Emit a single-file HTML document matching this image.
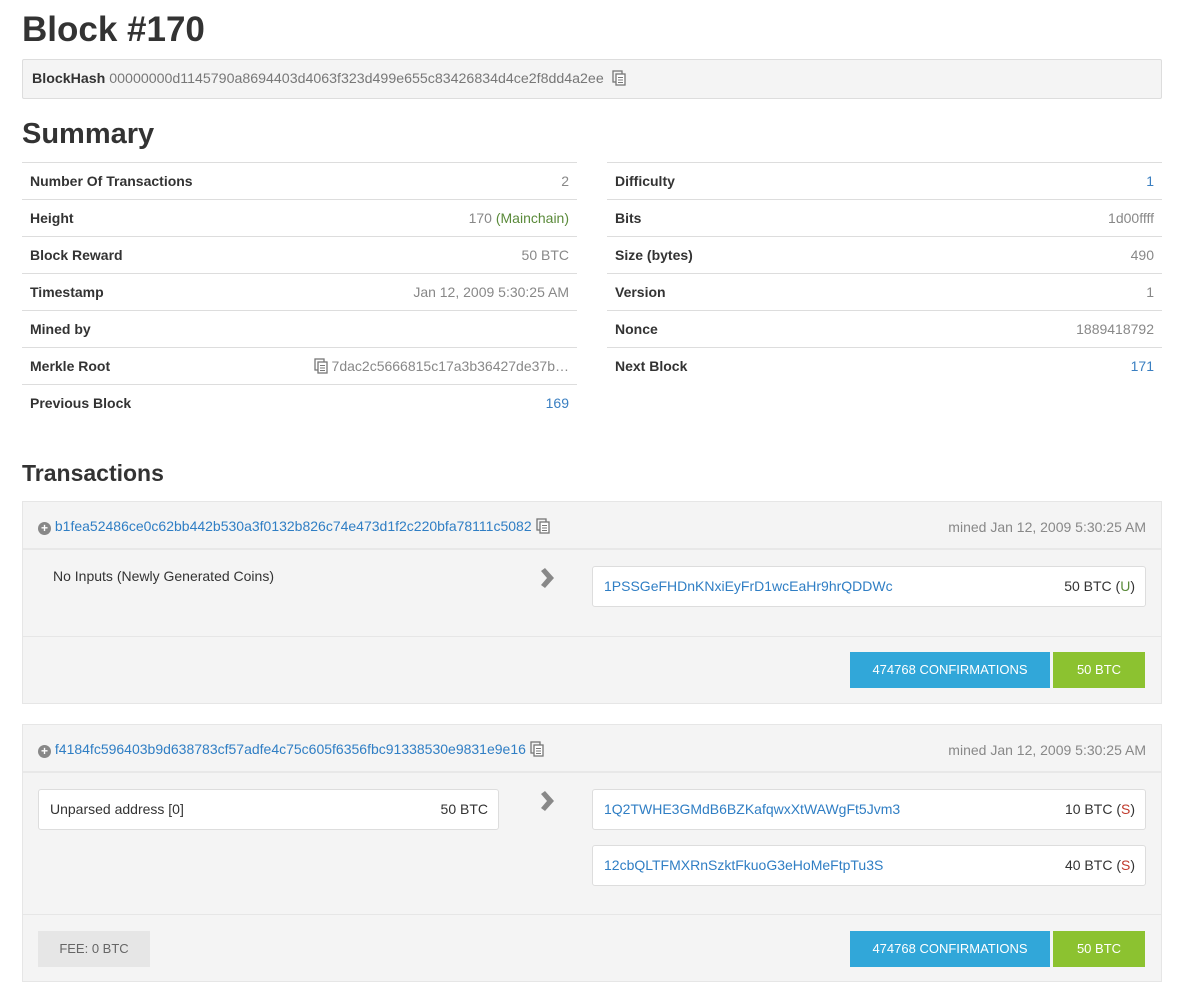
<!DOCTYPE html>
<html><head><style>
body{margin:0;background:#fff;font-family:"Liberation Sans",sans-serif;color:#333;font-size:14px}
.a{position:absolute}
h1{position:absolute;left:22px;top:10px;margin:0;font-size:35px;font-weight:bold;color:#333}
h2{position:absolute;left:22px;margin:0;font-weight:bold;color:#333}
.hash{left:22px;top:59px;width:1138px;height:38px;background:#f4f4f4;border:1px solid #ddd;border-radius:2px;line-height:38px;color:#777;font-size:14.2px}
.hash b{color:#333;margin-left:9px}
table{position:absolute;border-collapse:collapse;width:555px}
td{border-top:1px solid #ddd;height:36px;padding:0 8px;font-size:14px}
td:first-child{font-weight:bold;color:#333}
td:last-child{text-align:right;color:#888}
.l{color:#3a7fc1!important}
.tx{position:absolute;left:22px;width:1138px;background:#f4f4f4;border:1px solid #e6e6e6}
.th{height:46px;border-bottom:2px solid #e8e8e8;position:relative}
.blue{color:#2f7ec4}
.box{position:absolute;background:#fff;border:1px solid #ddd;border-radius:3px;height:39px;line-height:39px}
.btn{position:absolute;height:36px;line-height:36px;color:#fff;text-align:center;font-size:13px}
.ic{display:inline-block;vertical-align:-3px;margin-left:4px}
.plus{display:inline-block;width:13px;height:13px;border-radius:50%;background:#888;color:#fff;font-size:12px;line-height:13px;text-align:center;font-weight:bold;vertical-align:-1px}
.arr{position:absolute}
</style></head><body>
<svg width="0" height="0" style="position:absolute"><defs><symbol id="cp" viewBox="0 0 14 16"><rect x="1" y="1" width="9" height="11" fill="none" stroke="#777" stroke-width="1.3"/><rect x="4" y="4" width="9" height="11" fill="#fff" stroke="#777" stroke-width="1.3"/><path d="M6 7.5h5M6 10h5M6 12.5h5" stroke="#777" stroke-width="1"/></symbol>
<symbol id="ar" viewBox="0 0 16 20"><path d="M2 3 L6 0 L15 10 L6 20 L2 17 L8 10 Z" fill="#888"/></symbol></defs></svg>
<h1>Block #170</h1>
<div class="a hash"><b>BlockHash</b> 00000000d1145790a8694403d4063f323d499e655c83426834d4ce2f8dd4a2ee <svg class="ic" width="14" height="16"><use href="#cp"/></svg></div>
<h2 style="top:118px;font-size:29px">Summary</h2>
<table style="left:22px;top:162px">
<tr><td>Number Of Transactions</td><td>2</td></tr>
<tr><td>Height</td><td>170 <span style="color:#5a8a3a">(Mainchain)</span></td></tr>
<tr><td>Block Reward</td><td>50 BTC</td></tr>
<tr><td>Timestamp</td><td>Jan 12, 2009 5:30:25 AM</td></tr>
<tr><td>Mined by</td><td></td></tr>
<tr><td>Merkle Root</td><td><svg class="ic" width="14" height="16"><use href="#cp"/></svg> 7dac2c5666815c17a3b36427de37b…</td></tr>
<tr><td>Previous Block</td><td class="l">169</td></tr>
</table>
<table style="left:607px;top:162px">
<tr><td>Difficulty</td><td class="l">1</td></tr>
<tr><td>Bits</td><td>1d00ffff</td></tr>
<tr><td>Size (bytes)</td><td>490</td></tr>
<tr><td>Version</td><td>1</td></tr>
<tr><td>Nonce</td><td>1889418792</td></tr>
<tr><td>Next Block</td><td class="l">171</td></tr>
</table>
<h2 style="top:460px;font-size:23px">Transactions</h2>

<div class="tx" style="top:501px;height:201px">
 <div class="th"><div class="a" style="left:15px;top:16px"><span class="plus">+</span> <span class="blue">b1fea52486ce0c62bb442b530a3f0132b826c74e473d1f2c220bfa78111c5082</span><svg class="ic" width="14" height="16"><use href="#cp"/></svg></div>
 <div class="a" style="right:15px;top:17px;color:#888">mined Jan 12, 2009 5:30:25 AM</div></div>
 <div class="a" style="left:30px;top:66px">No Inputs (Newly Generated Coins)</div>
 <svg class="arr" style="left:516px;top:66px" width="16" height="20"><use href="#ar"/></svg>
 <div class="box" style="left:569px;top:64px;width:552px"><span class="blue" style="margin-left:11px">1PSSGeFHDnKNxiEyFrD1wcEaHr9hrQDDWc</span><span style="position:absolute;right:10px">50 BTC (<span style="color:#5a8a3a">U</span>)</span></div>
 <div class="a" style="left:0;top:134px;width:1138px;border-top:1px solid #e6e6e6"></div>
 <div class="btn" style="left:827px;top:150px;width:200px;background:#31a7d9">474768 CONFIRMATIONS</div>
 <div class="btn" style="left:1030px;top:150px;width:92px;background:#8cc230">50 BTC</div>
</div>

<div class="tx" style="top:724px;height:256px">
 <div class="th"><div class="a" style="left:15px;top:16px"><span class="plus">+</span> <span class="blue">f4184fc596403b9d638783cf57adfe4c75c605f6356fbc91338530e9831e9e16</span><svg class="ic" width="14" height="16"><use href="#cp"/></svg></div>
 <div class="a" style="right:15px;top:17px;color:#888">mined Jan 12, 2009 5:30:25 AM</div></div>
 <div class="box" style="left:15px;top:64px;width:459px"><span style="margin-left:11px">Unparsed address [0]</span><span style="position:absolute;right:10px">50 BTC</span></div>
 <svg class="arr" style="left:516px;top:66px" width="16" height="20"><use href="#ar"/></svg>
 <div class="box" style="left:569px;top:64px;width:552px"><span class="blue" style="margin-left:11px">1Q2TWHE3GMdB6BZKafqwxXtWAWgFt5Jvm3</span><span style="position:absolute;right:10px">10 BTC (<span style="color:#c0392b">S</span>)</span></div>
 <div class="box" style="left:569px;top:120px;width:552px"><span class="blue" style="margin-left:11px">12cbQLTFMXRnSzktFkuoG3eHoMeFtpTu3S</span><span style="position:absolute;right:10px">40 BTC (<span style="color:#c0392b">S</span>)</span></div>
 <div class="a" style="left:0;top:189px;width:1138px;border-top:1px solid #e6e6e6"></div>
 <div class="btn" style="left:15px;top:206px;width:112px;background:#e6e6e6;color:#666">FEE: 0 BTC</div>
 <div class="btn" style="left:827px;top:206px;width:200px;background:#31a7d9">474768 CONFIRMATIONS</div>
 <div class="btn" style="left:1030px;top:206px;width:92px;background:#8cc230">50 BTC</div>
</div>
</body></html>
